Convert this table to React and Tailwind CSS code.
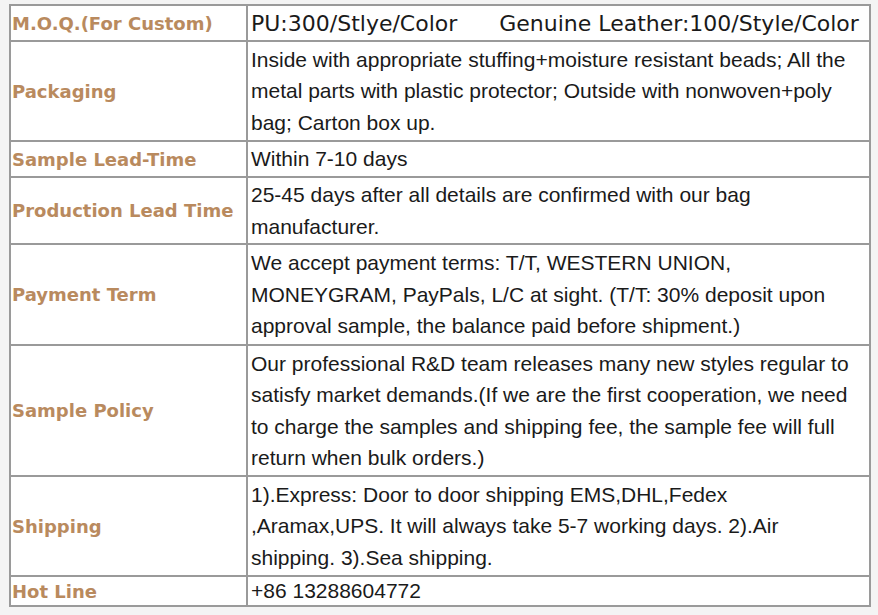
import React from "react";

const rows = [
  { label: "Packaging", h: "h-[98px]", lines: ["Inside with appropriate stuffing+moisture resistant beads; All the", "metal parts with plastic protector; Outside with nonwoven+poly", "bag; Carton box up."] },
  { label: "Sample Lead-Time", h: "h-[34px]", lines: ["Within 7-10 days"] },
  { label: "Production Lead Time", h: "h-[65px]", lines: ["25-45 days after all details are confirmed with our bag", "manufacturer."] },
  { label: "Payment Term", h: "h-[99px]", lines: ["We accept payment terms: T/T, WESTERN UNION,", "MONEYGRAM, PayPals, L/C at sight. (T/T: 30% deposit upon", "approval sample, the balance paid before shipment.)"] },
  { label: "Sample Policy", h: "h-[129px]", lines: ["Our professional R&D team releases many new styles regular to", "satisfy market demands.(If we are the first cooperation, we need", "to charge the samples and shipping fee, the sample fee will full", "return when bulk orders.)"] },
  { label: "Shipping", h: "h-[98px]", lines: ["1).Express: Door to door shipping EMS,DHL,Fedex", ",Aramax,UPS. It will always take 5-7 working days. 2).Air", "shipping. 3).Sea shipping."] },
  { label: "Hot Line", h: "h-[28px]", lines: ["+86 13288604772"] },
];

const labelCls =
  "bg-white flex items-center pl-[1px] whitespace-nowrap text-[18px] font-bold text-[#b98a5e] font-['DejaVu_Sans',Verdana,sans-serif]";
const bodyCls =
  "bg-white flex flex-col justify-center pl-[3px] text-[21px] leading-[31.5px] text-[#1a1a1a] font-['Liberation_Sans',Arial,sans-serif]";

export default function App() {
  return (
    <div className="w-[878px] h-[615px] bg-[#f4f4f4] pt-[4px] pl-[9px] overflow-hidden">
      <div className="w-[862px] grid grid-cols-[235px_621px] gap-[2px] p-[2px] bg-[#9a9a9a]">
        <div className={`${labelCls} h-[34px]`}>M.O.Q.(For Custom)</div>
        <div className="bg-white flex items-center pl-[3px] pt-[1px] whitespace-pre text-[22px] text-[#1a1a1a] font-['DejaVu_Sans',Verdana,sans-serif]">
          {"PU:300/Stlye/Color      Genuine Leather:100/Style/Color"}
        </div>
        {rows.map((r) => (
          <React.Fragment key={r.label}>
            <div className={`${labelCls} ${r.h}`}>{r.label}</div>
            <div className={`${bodyCls} ${r.h}`}>
              {r.lines.map((l, i) => (
                <div key={i} className="whitespace-nowrap">
                  {l}
                </div>
              ))}
            </div>
          </React.Fragment>
        ))}
      </div>
    </div>
  );
}
